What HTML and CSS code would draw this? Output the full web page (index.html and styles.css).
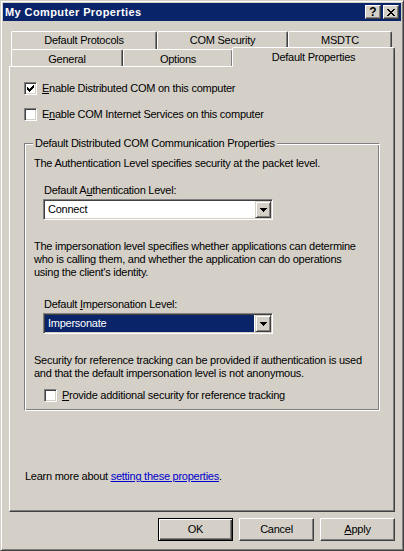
FILE: index.html
```html
<!DOCTYPE html>
<html lang="en">

<head>
    <meta charset="UTF-8">
    <meta name="viewport" content="width=device-width, initial-scale=1.0">
    <title>My Computer Properties</title>
    <link rel="stylesheet" href="styles.css">
</head>

<body>
    <div class="window">
        <div class="titlebar">
            <span class="title">My Computer Properties</span>
            <div class="caption-buttons">
                <span class="caption-btn help">?</span>
                <span class="caption-btn close">
                    <svg width="8" height="7" viewBox="0 0 8 7" shape-rendering="crispEdges">
                        <path d="M0 0h2v1h-2zM6 0h2v1h-2zM1 1h2v1h-2zM5 1h2v1h-2zM2 2h4v1h-4zM3 3h2v1h-2zM2 4h4v1h-4zM1 5h2v1h-2zM5 5h2v1h-2zM0 6h2v1h-2zM6 6h2v1h-2z" fill="#000" />
                    </svg>
                </span>
            </div>
        </div>

        <div class="tabs">
            <div class="tab-row back">
                <div class="tab tab-protocols">Default Protocols</div>
                <div class="tab tab-security">COM Security</div>
                <div class="tab tab-msdtc">MSDTC</div>
            </div>
            <div class="tab-row front">
                <div class="tab tab-general">General</div>
                <div class="tab tab-options">Options</div>
                <div class="tab tab-defaults active">Default Properties</div>
            </div>
        </div>

        <div class="panel">
            <label class="check-row">
                <span class="checkbox">
                    <svg width="7" height="7" viewBox="0 0 7 7" shape-rendering="crispEdges">
                        <path d="M6 0h1v3h-1zM5 1h1v3h-1zM4 2h1v3h-1zM3 3h1v3h-1zM2 4h1v3h-1zM1 3h1v3h-1zM0 2h1v3h-1z" fill="#000" />
                    </svg>
                </span>
                <span><u>E</u>nable Distributed COM on this computer</span>
            </label>
            <label class="check-row second">
                <span class="checkbox"></span>
                <span>E<u>n</u>able COM Internet Services on this computer</span>
            </label>

            <fieldset class="group">
                <legend>Default Distributed COM Communication Properties</legend>
                <p>The Authentication Level specifies security at the packet level.</p>
                <div class="field-label">Default A<u>u</u>thentication Level:</div>
                <div class="combo">
                    <span class="combo-value">Connect</span>
                    <span class="combo-btn">
                        <svg width="7" height="4" viewBox="0 0 7 4" shape-rendering="crispEdges">
                            <path d="M0 0h7v1h-7zM1 1h5v1h-5zM2 2h3v1h-3zM3 3h1v1h-1z" fill="#000" />
                        </svg>
                    </span>
                </div>
                <p class="para">The impersonation level specifies whether applications can determine<br>
                    who is calling them, and whether the application can do operations<br>
                    using the client's identity.</p>
                <div class="field-label label-second">Default <u>I</u>mpersonation Level:</div>
                <div class="combo">
                    <span class="combo-value selected">Impersonate</span>
                    <span class="combo-btn">
                        <svg width="7" height="4" viewBox="0 0 7 4" shape-rendering="crispEdges">
                            <path d="M0 0h7v1h-7zM1 1h5v1h-5zM2 2h3v1h-3zM3 3h1v1h-1z" fill="#000" />
                        </svg>
                    </span>
                </div>
                <p class="para">Security for reference tracking can be provided if authentication is used<br>
                    and that the default impersonation level is not anonymous.</p>
                <label class="check-row tracking">
                    <span class="checkbox"></span>
                    <span><u>P</u>rovide additional security for reference tracking</span>
                </label>
            </fieldset>

            <p class="learn">Learn more about <a href="javascript:;">setting these properties</a>.</p>
        </div>

        <div class="buttons">
            <button class="btn default">OK</button>
            <button class="btn">Cancel</button>
            <button class="btn"><u>A</u>pply</button>
        </div>
    </div>
</body>

</html>
```

FILE: styles.css
```css
* {
    margin: 0;
    padding: 0;
    box-sizing: border-box;
}

body {
    background-color: #d4d0c8;
    font-family: "Liberation Sans", Arial, sans-serif;
    font-size: 11px;
    line-height: 13px;
    letter-spacing: -0.25px;
    color: #000;
}

u {
    text-decoration: underline;
    text-underline-offset: 1px;
}

/* window frame */
.window {
    width: 404px;
    height: 551px;
    padding: 2px;
    background-color: #d4d0c8;
    border: 1px solid;
    border-color: #d4d0c8 #404040 #404040 #d4d0c8;
    box-shadow: inset 1px 1px #fff, inset -1px -1px #808080;
}

.titlebar {
    display: flex;
    align-items: center;
    justify-content: space-between;
    height: 18px;
    padding: 0 2px 0 2px;
    background-color: #0a246a;
}

.title {
    color: #fff;
    font-weight: bold;
    font-size: 11px;
    letter-spacing: 0.4px;
}

.caption-buttons {
    display: flex;
    gap: 2px;
}

.caption-btn {
    display: flex;
    align-items: center;
    justify-content: center;
    width: 16px;
    height: 14px;
    background-color: #d4d0c8;
    border: 1px solid;
    border-color: #fff #404040 #404040 #fff;
    box-shadow: inset -1px -1px #808080;
}

.help {
    font-weight: bold;
    font-size: 12px;
    line-height: 12px;
    letter-spacing: 0;
}

/* tab strip */
.tabs {
    margin: 10px 6px 0 6px;
}

.tab-row {
    display: flex;
    padding-left: 2px;
}

.tab-row.back {
    height: 18px;
}

.tab-row.front {
    height: 17px;
    align-items: flex-end;
}

.tab {
    height: 100%;
    text-align: center;
    background-color: #d4d0c8;
    border-top: 1px solid #fff;
    border-left: 1px solid #fff;
    border-right: 1px solid #404040;
    border-radius: 2px 2px 0 0;
    box-shadow: inset -1px 0 #808080;
    padding-top: 2px;
}

.tab-protocols { width: 146px; }
.tab-security { width: 131px; }
.tab-msdtc { width: 104px; }
.tab-general { width: 112px; }
.tab-options { width: 110px; }

.tab.active {
    position: relative;
    z-index: 1;
    width: 163px;
    height: 20px;
    margin-left: -1px;
    margin-bottom: -1px;
    padding-top: 3px;
}

.tab-row.front .tab:not(.active) {
    padding-top: 3px;
}

/* page area */
.panel {
    width: 386px;
    height: 446px;
    margin-left: 6px;
    padding: 15px 0 0 14px;
    border-top: 1px solid #fff;
    border-left: 1px solid #fff;
    border-right: 1px solid #404040;
    border-bottom: 1px solid #404040;
    box-shadow: inset -1px -1px #808080;
}

.check-row {
    display: flex;
    align-items: center;
    gap: 5px;
    height: 13px;
}

.check-row.second {
    margin-top: 13px;
}

.checkbox {
    display: flex;
    align-items: center;
    justify-content: center;
    width: 13px;
    height: 13px;
    background-color: #fff;
    border: 1px solid;
    border-color: #808080 #fff #fff #808080;
    box-shadow: inset 1px 1px #404040, inset -1px -1px #d4d0c8;
}

.group {
    width: 356px;
    min-width: 0;
    margin-top: 16px;
    padding: 7px 0 8px 9px;
    border: 1px solid;
    border-color: #808080 #fff #fff #808080;
    box-shadow: inset 1px 1px #fff, inset -1px -1px #808080;
}

.group legend {
    margin-left: -1px;
    padding: 0 2px;
    background-color: #d4d0c8;
}

.field-label {
    margin: 14px 0 0 10px;
}

.label-second {
    margin-top: 19px;
}

.combo {
    display: flex;
    width: 230px;
    height: 21px;
    margin: 2px 0 0 9px;
    padding: 1px;
    background-color: #fff;
    border: 1px solid;
    border-color: #808080 #fff #fff #808080;
    box-shadow: inset 1px 1px #404040, inset -1px -1px #d4d0c8;
}

.combo-value {
    flex: 1;
    padding: 2px 0 0 3px;
    margin-right: 1px;
}

.combo-value.selected {
    background-color: #0a246a;
    color: #fff;
}

.combo-btn {
    display: flex;
    align-items: center;
    justify-content: center;
    width: 16px;
    height: 17px;
    background-color: #d4d0c8;
    border: 1px solid;
    border-color: #d4d0c8 #404040 #404040 #d4d0c8;
    box-shadow: inset 1px 1px #fff, inset -1px -1px #808080;
}

.para {
    margin-top: 20px;
}

.tracking {
    margin: 9px 0 0 10px;
}

.learn {
    margin: 59px 0 0 1px;
}

.learn a {
    color: #0000cc;
}

/* dialog buttons */
.buttons {
    display: flex;
    justify-content: flex-end;
    gap: 6px;
    margin: 6px 6px 0 0;
}

.btn {
    width: 75px;
    height: 23px;
    font: inherit;
    letter-spacing: inherit;
    color: #000;
    background-color: #d4d0c8;
    border: 1px solid;
    border-color: #fff #404040 #404040 #fff;
    box-shadow: inset -1px -1px #808080;
}

.btn.default {
    border: 1px solid #000;
    box-shadow: inset 1px 1px #fff, inset -1px -1px #404040, inset -2px -2px #808080;
}
```
